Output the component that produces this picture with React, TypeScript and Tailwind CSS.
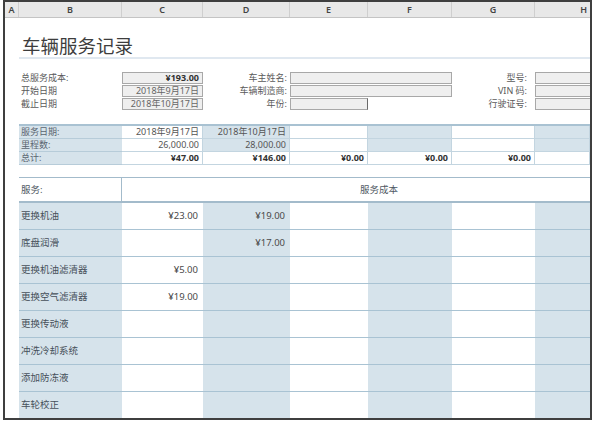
import React from 'react';

const GRID = 'grid grid-cols-[14px_103px_81px_87px_78px_84px_83px_55px]';
const BLUE = 'bg-[#d6e3eb]';

const services: { name: string; c?: string; d?: string }[] = [
  { name: '更换机油', c: '¥23.00', d: '¥19.00' },
  { name: '底盘润滑', d: '¥17.00' },
  { name: '更换机油滤清器', c: '¥5.00' },
  { name: '更换空气滤清器', c: '¥19.00' },
  { name: '更换传动液' },
  { name: '冲洗冷却系统' },
  { name: '添加防冻液' },
  { name: '车轮校正' },
];

function Box({ children, bold, right }: { children?: React.ReactNode; bold?: boolean; right?: boolean }) {
  return (
    <div
      className={`h-[12px] border border-[#a8a8a8] bg-[#efefef] text-right pr-[3px] text-[9px] leading-[10px] ${
        bold ? 'font-bold text-[#333]' : 'text-[#666]'
      } ${right ? 'border-r-[#6a6a6a]' : ''}`}
    >
      {children}
    </div>
  );
}

export default function App() {
  const cols = ['A', 'B', 'C', 'D', 'E', 'F', 'G', 'H'];
  return (
    <div className="w-[597px] h-[424px] bg-white pl-[3px] font-['Noto_Sans','Noto_Sans_CJK_SC',sans-serif]">
      <div className="w-[589px] h-[420px] border-2 border-[#3f3f3f] overflow-hidden bg-white">
        {/* column header */}
        <div className={`${GRID} h-[16px] bg-[#e8e8e8] border-b border-[#c4c4c4]`}>
          {cols.map((c, i) => (
            <div
              key={c}
              className={`flex items-center text-[9px] font-semibold text-[#444] ${
                i < 7 ? 'justify-center border-r border-[#cfcfcf]' : 'justify-end pr-[3px]'
              }`}
            >
              {c}
            </div>
          ))}
        </div>

        {/* title */}
        <div className="pl-[14px]">
          <div className="pt-[15px] pl-[3px] text-[18.5px] leading-[24px] text-[#3d3d3d] font-['Noto_Sans_CJK_SC',sans-serif]">
            车辆服务记录
          </div>
          <div className="h-[2px] bg-[#e0e8f0]" />
        </div>

        {/* summary */}
        <div className="mt-[13px] text-[9px] leading-[12px] text-[#5a5a5a]">
          {[
            { l: '总服务成本:', v: '¥193.00', bold: true, d: '车主姓名:', g: '型号:', wide: true },
            { l: '开始日期', v: '2018年9月17日', d: '车辆制造商:', g: 'VIN 码:', wide: true },
            { l: '截止日期', v: '2018年10月17日', d: '年份:', g: '行驶证号:', wide: false },
          ].map((r, i) => (
            <div key={i} className={`${GRID} h-[13px]`}>
              <div />
              <div className="pl-[2px]">{r.l}</div>
              <Box bold={r.bold}>{r.v}</Box>
              <div className="text-right pr-[3px]">{r.d}</div>
              {r.wide ? (
                <div className="col-span-2">
                  <Box />
                </div>
              ) : (
                <>
                  <Box right />
                  <div />
                </>
              )}
              <div className="text-right pr-[8px]">{r.g}</div>
              <div className="h-[12px] border-y border-l border-[#a8a8a8] bg-[#efefef]" />
            </div>
          ))}
        </div>

        {/* dates table */}
        <div className="mt-[13px] text-[9px] leading-[12px]">
          <div className="grid grid-cols-[14px_1fr] ">
            <div />
            <div className="border-t-2 border-[#a9c2d2]" />
          </div>
          {[
            { l: '服务日期:', vals: ['2018年9月17日', '2018年10月17日', '', '', '', ''], bold: false },
            { l: '里程数:', vals: ['26,000.00', '28,000.00', '', '', '', ''], bold: false },
            { l: '总计:', vals: ['¥47.00', '¥146.00', '¥0.00', '¥0.00', '¥0.00', ''], bold: true },
          ].map((r, ri) => (
            <div key={ri} className={`${GRID} h-[13px]`}>
              <div />
              <div className={`${BLUE} pl-[2px] text-[#5a6570] border-b border-[#b7ccd9]`}>{r.l}</div>
              {r.vals.map((v, ci) => {
                const blue = ri < 2 && ci % 2 === 1;
                return (
                  <div
                    key={ci}
                    className={`text-right pr-[3px] border-b border-r border-[#c3d5e0] ${blue ? BLUE : 'bg-white'} ${
                      r.bold ? 'font-bold text-[#333]' : 'text-[#555]'
                    }`}
                  >
                    {v}
                  </div>
                );
              })}
            </div>
          ))}
        </div>

        {/* services table */}
        <div className="mt-[12px] text-[9.5px] leading-[12px]">
          <div className={`${GRID} h-[26px]`}>
            <div />
            <div className="flex items-center pl-[2px] text-[#4f5963] border-t border-b-2 border-r border-[#a3bbcb]">服务:</div>
            <div className="col-span-6 flex items-center pl-[238px] text-[#4f5963] border-t border-b-2 border-[#a3bbcb]">服务成本</div>
          </div>
          {services.map((s, i) => (
            <div key={i} className={`${GRID} h-[27px]`}>
              <div />
              <div className={`${BLUE} flex items-center pl-[2px] text-[#46505a] border-b border-[#a9c3d3]`}>{s.name}</div>
              {[s.c, s.d, '', '', '', ''].map((v, ci) => (
                <div
                  key={ci}
                  className={`flex items-center justify-end pr-[5px] text-[#4a4a4a] border-b border-[#a9c3d3] ${
                    ci % 2 === 1 ? BLUE : 'bg-white'
                  }`}
                >
                  {v}
                </div>
              ))}
            </div>
          ))}
        </div>
      </div>
    </div>
  );
}
